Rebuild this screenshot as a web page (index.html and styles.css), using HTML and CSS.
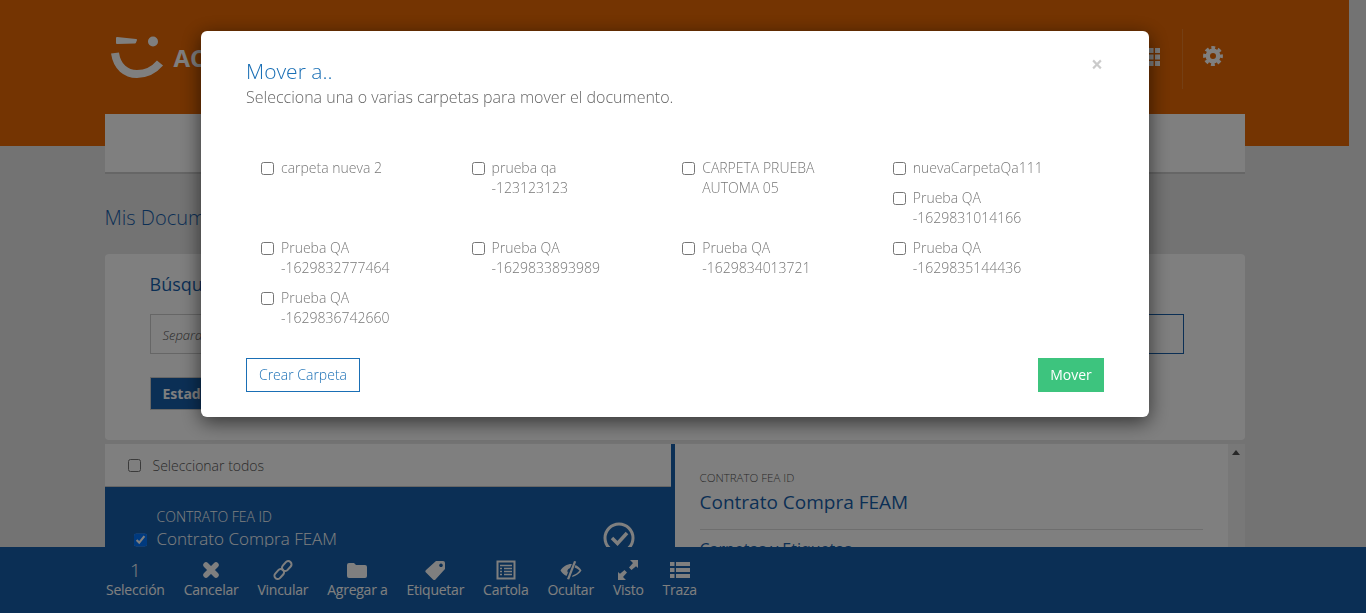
FILE: index.html
```html
<!DOCTYPE html>
<html lang="es">
<head>
  <meta charset="UTF-8" />
  <meta name="viewport" content="width=device-width, initial-scale=1.0" />
  <title>Mis Documentos</title>
  <link rel="stylesheet" href="styles.css">
</head>
<body>
  <div class="page">
    <header class="header">
      <div class="container header-row">
        <div class="logo">
          <svg width="54" height="44" viewBox="0 0 54 44">
            <path d="M7 3 L26 5 L25 7.500 L7 8 Z" fill="#fff" stroke="#fff" stroke-width="2" stroke-linejoin="round"/>
            <circle cx="43" cy="6.500" r="5" fill="#fff"/>
            <path d="M5 18 C7 32 16 39 27 39 C36 39 44 35 50 28" fill="none" stroke="#fff" stroke-width="8"/>
          </svg>
          <span class="logo-text">AC</span>
        </div>
        <div class="header-icons">
          <svg class="grid-icon" width="18" height="18" viewBox="0 0 18 18" fill="#fff">
            <rect x="0" y="0" width="5" height="5"/><rect x="6.500" y="0" width="5" height="5"/><rect x="13" y="0" width="5" height="5"/>
            <rect x="0" y="6.500" width="5" height="5"/><rect x="6.500" y="6.500" width="5" height="5"/><rect x="13" y="6.500" width="5" height="5"/>
            <rect x="0" y="13" width="5" height="5"/><rect x="6.500" y="13" width="5" height="5"/><rect x="13" y="13" width="5" height="5"/>
          </svg>
          <div class="header-divider"></div>
          <svg class="gear-icon" width="20" height="20" viewBox="0 0 20 20" fill="none" stroke="#fff">
            <circle cx="10" cy="10" r="5.200" stroke-width="4.400"/>
            <circle cx="10" cy="10" r="8.300" stroke-width="3.200" stroke-dasharray="3.800 2.720" stroke-dashoffset="1.900"/>
          </svg>
        </div>
      </div>
    </header>

    <div class="container">
      <nav class="nav-card"></nav>
      <h1 class="page-title">Mis Documentos</h1>

      <section class="search-card">
        <h2>Búsqueda</h2>
        <div class="search-row">
          <div class="search-input">Separa</div>
          <div class="search-button"></div>
        </div>
        <button class="state-button">Estado</button>
      </section>

      <section class="documents">
        <div class="doc-list">
          <label class="select-all"><input type="checkbox"> Seleccionar todos</label>
          <div class="doc-row">
            <input type="checkbox" checked>
            <div class="doc-text">
              <small>CONTRATO FEA ID</small>
              <span>Contrato Compra FEAM</span>
            </div>
            <svg class="doc-check" width="32" height="32" viewBox="0 0 32 32" fill="none" stroke="#fff">
              <circle cx="16" cy="16" r="14" stroke-width="3"/>
              <path d="M9 16 L14.500 21.500 L24 11" stroke-width="3.500"/>
            </svg>
          </div>
        </div>
        <div class="doc-detail">
          <small>CONTRATO FEA ID</small>
          <h3>Contrato Compra FEAM</h3>
          <hr>
          <h4>Carpetas y Etiquetas</h4>
        </div>
        <div class="fake-scroll"><div class="scroll-arrow"></div></div>
      </section>
    </div>
  </div>

  <footer class="action-bar">
    <div class="action"><b class="count">1</b>Selección</div>
    <div class="action">
      <svg width="20" height="20" viewBox="0 0 20 20"><path d="M5 5 L15 15 M15 5 L5 15" stroke="#fff" stroke-width="5.500" stroke-linecap="round"/></svg>
      Cancelar
    </div>
    <div class="action">
      <svg width="20" height="20" viewBox="0 0 20 20" fill="none" stroke="#fff" stroke-width="2">
        <rect x="10.500" y="0.500" width="6.500" height="11" rx="3.200" transform="rotate(42 13.700 6)"/>
        <rect x="3" y="8.500" width="6.500" height="11" rx="3.200" transform="rotate(42 6.200 14)"/>
      </svg>
      Vincular
    </div>
    <div class="action">
      <svg width="20" height="20" viewBox="0 0 20 20" fill="#fff"><path d="M0 5 Q0 3 2 3 H7 L9 5 H18 Q20 5 20 7 V16 Q20 18 18 18 H2 Q0 18 0 16 Z"/></svg>
      Agregar a
    </div>
    <div class="action">
      <svg width="20" height="20" viewBox="0 0 20 20" fill="#fff"><path fill-rule="evenodd" d="M11 1 H18 Q20 1 20 3 V9 L10 20 Q9 20.500 8 19.500 L0.500 12 Q0 11 1 10 Z M16 3.500 A1.800 1.800 0 1 0 16.010 3.500 Z"/></svg>
      Etiquetar
    </div>
    <div class="action">
      <svg width="20" height="20" viewBox="0 0 20 20" fill="none" stroke="#fff">
        <rect x="1.500" y="1.500" width="17" height="17" stroke-width="2"/>
        <path d="M4 5.500 H16 M4 8.500 H6 M8 8.500 H16 M4 11.500 H6 M8 11.500 H16 M4 14.500 H6 M8 14.500 H16" stroke-width="1.700"/>
      </svg>
      Cartola
    </div>
    <div class="action">
      <svg width="22" height="20" viewBox="0 0 22 20" fill="#fff">
        <path d="M14 1 L7 19 L9.200 19.500 L16.200 1.500 Z"/>
        <path fill-rule="evenodd" d="M11.500 4 C7 4 3 6.500 0.500 10.500 C2 13 4 14.800 6.500 16 L11.900 4 Z M10 8 L8 13 Q6 10 10 8 Z"/>
        <path d="M15.500 5 L14.600 7.500 C17 8.500 18.500 9.500 19.500 10.500 C18 12.500 15.500 14.500 12.500 15.500 L12 17 C16 16 19.500 13.500 21.500 10.500 C20 8 18 6 15.500 5 Z"/>
      </svg>
      Ocultar
    </div>
    <div class="action">
      <svg width="20" height="20" viewBox="0 0 20 20" fill="#fff">
        <path d="M12 0 H21 V9 L18 6.200 L13.500 10 L11 7.500 L15 3 Z"/>
        <path d="M8 20 H-1 V11 L2 13.800 L6.500 10 L9 12.500 L5 17 Z"/>
      </svg>
      Visto
    </div>
    <div class="action">
      <svg width="20" height="20" viewBox="0 0 20 20" fill="#fff">
        <rect x="0" y="2" width="4.500" height="4"/><rect x="6" y="2" width="14" height="4"/>
        <rect x="0" y="8" width="4.500" height="4"/><rect x="6" y="8" width="14" height="4"/>
        <rect x="0" y="14" width="4.500" height="4"/><rect x="6" y="14" width="14" height="4"/>
      </svg>
      Traza
    </div>
  </footer>

  <div class="backdrop"></div>

  <div class="modal">
    <button class="close">×</button>
    <h2 class="modal-title">Mover a..</h2>
    <p class="modal-subtitle">Selecciona una o varias carpetas para mover el documento.</p>

    <div class="folders">
      <div class="folder-cell"><label class="folder"><input type="checkbox"><span>carpeta nueva 2</span></label></div>
      <div class="folder-cell"><label class="folder"><input type="checkbox"><span>prueba qa<br>-123123123</span></label></div>
      <div class="folder-cell"><label class="folder"><input type="checkbox"><span>CARPETA PRUEBA<br>AUTOMA 05</span></label></div>
      <div class="folder-cell">
        <label class="folder"><input type="checkbox"><span>nuevaCarpetaQa111</span></label>
        <label class="folder"><input type="checkbox"><span>Prueba QA<br>-1629831014166</span></label>
      </div>
      <div class="folder-cell"><label class="folder"><input type="checkbox"><span>Prueba QA<br>-1629832777464</span></label></div>
      <div class="folder-cell"><label class="folder"><input type="checkbox"><span>Prueba QA<br>-1629833893989</span></label></div>
      <div class="folder-cell"><label class="folder"><input type="checkbox"><span>Prueba QA<br>-1629834013721</span></label></div>
      <div class="folder-cell"><label class="folder"><input type="checkbox"><span>Prueba QA<br>-1629835144436</span></label></div>
      <div class="folder-cell"><label class="folder"><input type="checkbox"><span>Prueba QA<br>-1629836742660</span></label></div>
    </div>

    <div class="modal-footer">
      <button class="btn-outline">Crear Carpeta</button>
      <button class="btn-green">Mover</button>
    </div>
  </div>
</body>
</html>
```

FILE: styles.css
```css
html, body {
  height: 100%;
}
body {
  margin: 0;
  overflow: hidden;
  background: #e6e6e6;
  font-family: "Open Sans", sans-serif;
  font-size: 14px;
  color: #555;
}
.page {
  width: 1349px;
}
.container {
  width: 1140px;
  margin: 0 auto;
}

/* header */
.header {
  height: 146px;
  background: #e86804;
}
.header-row {
  display: flex;
  justify-content: space-between;
}
.logo {
  display: flex;
  align-items: center;
  gap: 10px;
  height: 44px;
  margin: 35px 0 0 5px;
}
.logo-text {
  font-size: 24px;
  font-weight: 700;
  color: #fff;
}
.header-icons {
  display: flex;
  align-items: flex-start;
  margin-right: 22px;
}
.grid-icon {
  margin-top: 48px;
}
.header-divider {
  width: 1px;
  height: 60px;
  margin: 29px 20px 0 22px;
  background: rgba(255,255,255,0.15);
}
.gear-icon {
  margin-top: 46px;
}

/* page content */
.nav-card {
  height: 58px;
  margin-top: -32px;
  background: #fff;
  border-bottom: 2px solid #ccc;
}
.page-title {
  margin: 30px 0 0;
  font-size: 20px;
  line-height: 28px;
  font-weight: 300;
  color: #175fab;
}
.search-card {
  height: 186px;
  margin-top: 22px;
  padding: 17px 61px 0 45px;
  box-sizing: border-box;
  background: #fff;
  border-radius: 4px;
}
.search-card h2 {
  margin: 0;
  font-size: 18px;
  line-height: 26px;
  font-weight: 400;
  color: #175fab;
}
.search-row {
  display: flex;
  height: 40px;
  margin-top: 17px;
}
.search-input {
  flex: 1;
  padding-left: 12px;
  line-height: 40px;
  font-size: 13px;
  font-weight: 300;
  font-style: italic;
  border: 1px solid #ccc;
  box-sizing: border-box;
}
.search-button {
  width: 200px;
  border: 1px solid #175fab;
  box-sizing: border-box;
}
.state-button {
  display: block;
  width: 200px;
  height: 33px;
  margin-top: 23px;
  padding: 0 12px;
  border: 1px solid #ccc;
  background: #175fab;
  color: #fff;
  font-family: inherit;
  font-size: 14px;
  font-weight: 700;
  text-align: left;
}

.documents {
  display: flex;
  height: 110px;
  margin-top: 4px;
  background: #fff;
}
.doc-list {
  width: 566px;
  border-right: 4px solid #175fab;
}
.select-all {
  display: flex;
  align-items: center;
  gap: 12px;
  height: 42px;
  padding-left: 23px;
  border-bottom: 1px solid #ccc;
  font-weight: 300;
}
.select-all input {
  margin: 0;
}
.doc-row {
  display: flex;
  height: 60px;
  padding-left: 29px;
  background: #175fab;
  color: #fff;
}
.doc-row input {
  margin: 46px 10px 0 0;
}
.doc-text {
  display: flex;
  flex-direction: column;
  padding-top: 20px;
  flex: 1;
}
.doc-text small {
  font-size: 14px;
  line-height: 20px;
  font-weight: 300;
}
.doc-text span {
  font-size: 17px;
  line-height: 24px;
  font-weight: 300;
}
.doc-check {
  margin: 35px 36px 0 0;
}
.doc-detail {
  flex: 1;
  padding: 26px 25px 0;
}
.doc-detail small {
  display: block;
  font-size: 11.500px;
  line-height: 16px;
  font-weight: 300;
}
.doc-detail h3 {
  margin: 3px 0 0;
  font-size: 19px;
  line-height: 26px;
  font-weight: 400;
  color: #175fab;
}
.doc-detail hr {
  margin: 14px 0 0;
  border: 0;
  border-top: 1px solid #ddd;
}
.doc-detail h4 {
  margin: 7px 0 0;
  font-size: 16px;
  line-height: 24px;
  font-weight: 400;
  color: #175fab;
}
.fake-scroll {
  width: 17px;
  background: #f1f1f1;
}
.scroll-arrow {
  width: 0;
  margin: 6px auto 0;
  border-left: 4px solid transparent;
  border-right: 4px solid transparent;
  border-bottom: 5px solid #505050;
}

/* bottom actions */
.action-bar {
  position: fixed;
  left: 0;
  right: 0;
  bottom: 0;
  height: 66px;
  padding: 13px 0 0 106px;
  box-sizing: border-box;
  display: flex;
  gap: 19px;
  background: #175fab;
  color: #fff;
}
.action {
  display: flex;
  flex-direction: column;
  align-items: center;
  font-size: 14px;
  line-height: 20px;
  letter-spacing: -0.25px;
}
.action svg {
  height: 20px;
}
.count {
  height: 20px;
  font-size: 19px;
  line-height: 20px;
  font-weight: 300;
}

/* modal */
.backdrop {
  position: fixed;
  inset: 0;
  background: rgba(0,0,0,0.5);
}
.modal {
  position: fixed;
  left: 201px;
  top: 31px;
  width: 948px;
  height: 386px;
  padding: 26px 45px 0;
  box-sizing: border-box;
  background: #fff;
  border-radius: 6px;
  box-shadow: 0 5px 20px rgba(0,0,0,0.6);
}
.close {
  position: absolute;
  top: 20px;
  right: 46px;
  padding: 0;
  border: 0;
  background: none;
  font-family: inherit;
  font-size: 21px;
  line-height: 26px;
  font-weight: 700;
  color: #000;
  opacity: 0.2;
}
.modal-title {
  margin: 0;
  font-size: 21px;
  line-height: 28px;
  font-weight: 300;
  color: #1a6fb5;
}
.modal-subtitle {
  margin: 0;
  font-size: 16px;
  line-height: 24px;
  font-weight: 300;
  color: #666;
}
.folders {
  display: grid;
  grid-template-columns: repeat(4, 210.600px);
  margin-top: 44px;
  padding-left: 15px;
}
.folder {
  display: flex;
  align-items: flex-start;
  gap: 7px;
  padding: 5px 0;
  line-height: 20px;
  font-weight: 300;
  color: #777;
}
.folder input {
  margin: 4px 0 0;
}
.modal-footer {
  display: flex;
  justify-content: space-between;
  position: absolute;
  left: 45px;
  right: 45px;
  top: 327px;
}
.btn-outline, .btn-green {
  height: 34px;
  padding: 0 0 2px;
  font-family: inherit;
  font-size: 14px;
  font-weight: 300;
}
.btn-outline {
  width: 114px;
  border: 1px solid #1a6fb5;
  background: #fff;
  color: #1a6fb5;
}
.btn-green {
  width: 66px;
  border: 0;
  background: #3dc47e;
  color: #fff;
  font-weight: 400;
}
```
